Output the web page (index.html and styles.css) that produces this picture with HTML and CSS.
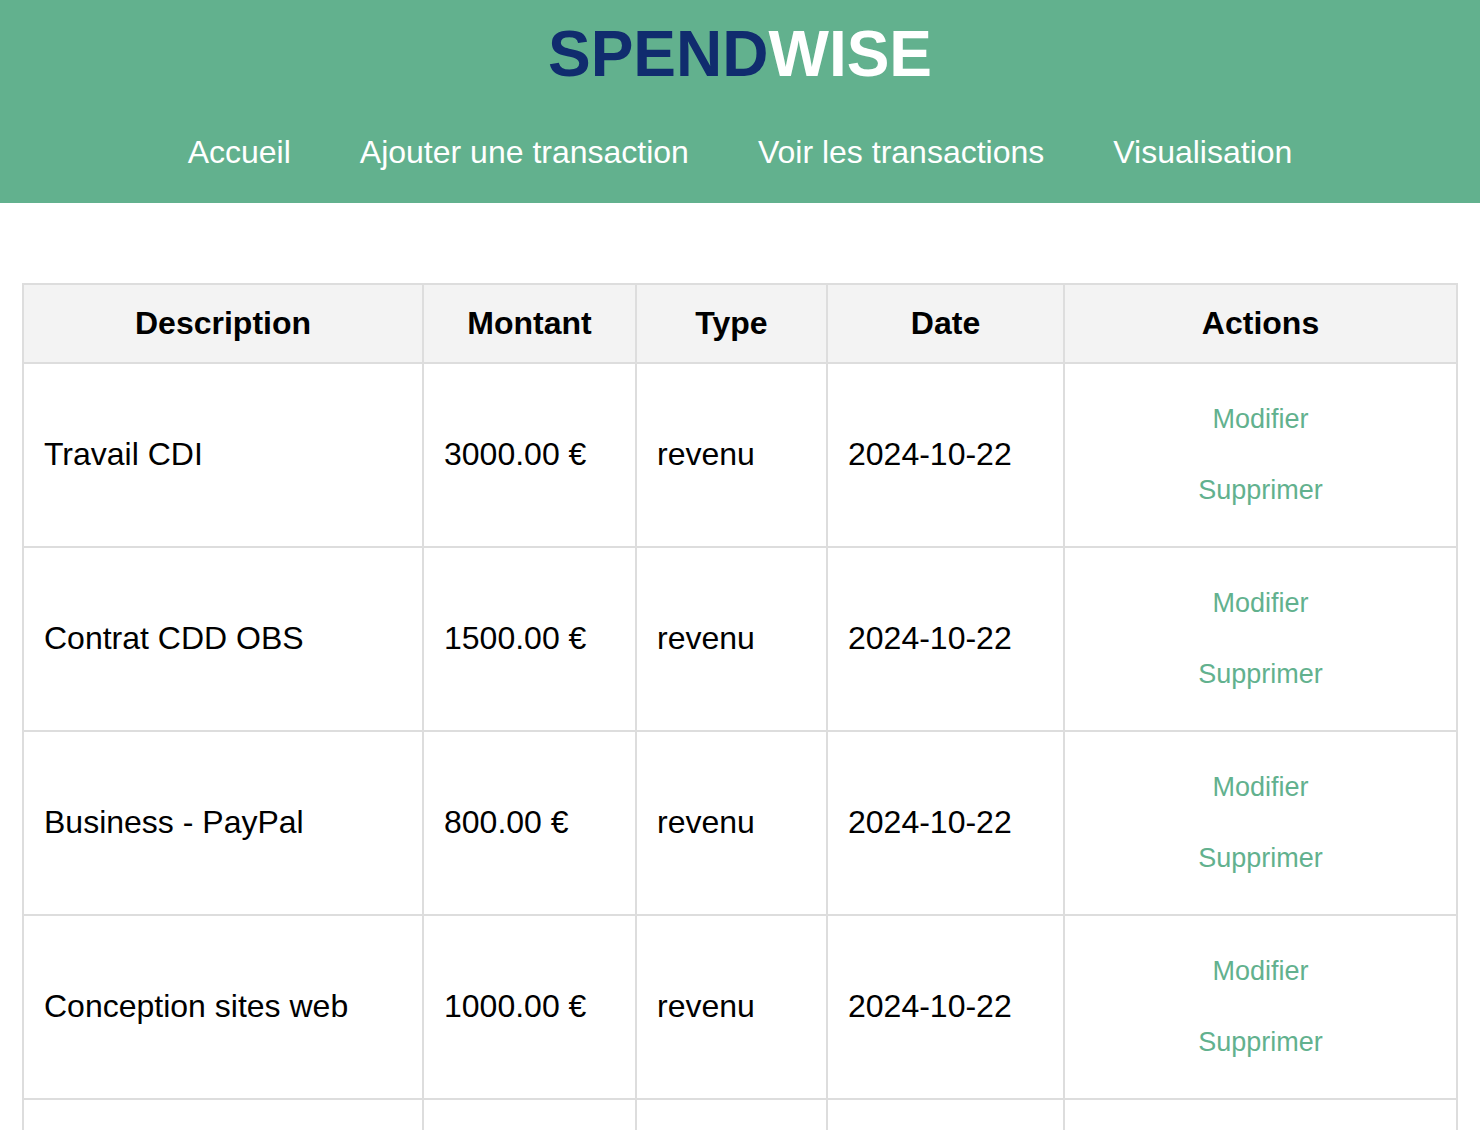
FILE: index.html
```html
<!DOCTYPE html>
<html lang="fr">
<head>
<meta charset="utf-8">
<meta name="viewport" content="width=device-width, initial-scale=1">
<title>SpendWise</title>
<link rel="stylesheet" href="styles.css">
</head>
<body>
<header class="site-header">
  <h1 class="logo"><span class="logo-accent">SPEND</span>WISE</h1>
  <nav class="site-nav">
    <a href="#">Accueil</a>
    <a href="#">Ajouter une transaction</a>
    <a href="#">Voir les transactions</a>
    <a href="#">Visualisation</a>
  </nav>
</header>
<main class="content">
  <table class="transactions">
    <colgroup>
      <col class="col-description"><col class="col-amount"><col class="col-type"><col class="col-date"><col class="col-actions">
    </colgroup>
    <thead>
      <tr><th>Description</th><th>Montant</th><th>Type</th><th>Date</th><th>Actions</th></tr>
    </thead>
    <tbody>
      <tr><td>Travail CDI</td><td>3000.00 €</td><td>revenu</td><td>2024-10-22</td><td><div class="actions"><button type="button">Modifier</button><button type="button">Supprimer</button></div></td></tr>
      <tr><td>Contrat CDD OBS</td><td>1500.00 €</td><td>revenu</td><td>2024-10-22</td><td><div class="actions"><button type="button">Modifier</button><button type="button">Supprimer</button></div></td></tr>
      <tr><td>Business - PayPal</td><td>800.00 €</td><td>revenu</td><td>2024-10-22</td><td><div class="actions"><button type="button">Modifier</button><button type="button">Supprimer</button></div></td></tr>
      <tr><td>Conception sites web</td><td>1000.00 €</td><td>revenu</td><td>2024-10-22</td><td><div class="actions"><button type="button">Modifier</button><button type="button">Supprimer</button></div></td></tr>
      <tr class="row-empty"><td></td><td></td><td></td><td></td><td></td></tr>
    </tbody>
  </table>
</main>
</body>
</html>
```
FILE: styles.css
```css
* {
  box-sizing: border-box;
}

body {
  margin: 0;
  background: #fff;
  color: #000;
  font-family: "Liberation Sans", Arial, sans-serif;
  font-size: 32px;
  line-height: 36px;
}

.site-header {
  padding: 17px 20px 33px;
  background: #62b18e;
  color: #fff;
  text-align: center;
}

.logo {
  margin: 0 0 42px;
  font-size: 64px;
  line-height: 75px;
}

.logo-accent {
  color: #102c6e;
}

.site-nav {
  display: flex;
  justify-content: center;
  gap: 69px;
}

.site-nav a {
  color: #fff;
  text-decoration: none;
}

.content {
  padding: 80px 22px 0;
}

.transactions {
  width: 100%;
  table-layout: fixed;
  border-collapse: collapse;
}

.col-description {
  width: 400px;
}

.col-amount {
  width: 213px;
}

.col-type {
  width: 191px;
}

.col-date {
  width: 237px;
}

.transactions th,
.transactions td {
  padding: 20px;
  border: 2px solid #ddd;
}

.transactions td {
  padding-bottom: 22px;
  text-align: left;
}

.transactions th {
  padding-bottom: 21px;
  background: #f3f3f3;
}

.actions {
  display: flex;
  flex-direction: column;
  align-items: center;
  gap: 41px;
  padding: 20px 0 19px;
}

.actions button {
  padding: 0;
  border: 0;
  background: none;
  color: #62b18e;
  font-family: inherit;
  font-size: 27px;
  line-height: 30px;
  cursor: pointer;
}

.row-empty {
  height: 184px;
}
```
